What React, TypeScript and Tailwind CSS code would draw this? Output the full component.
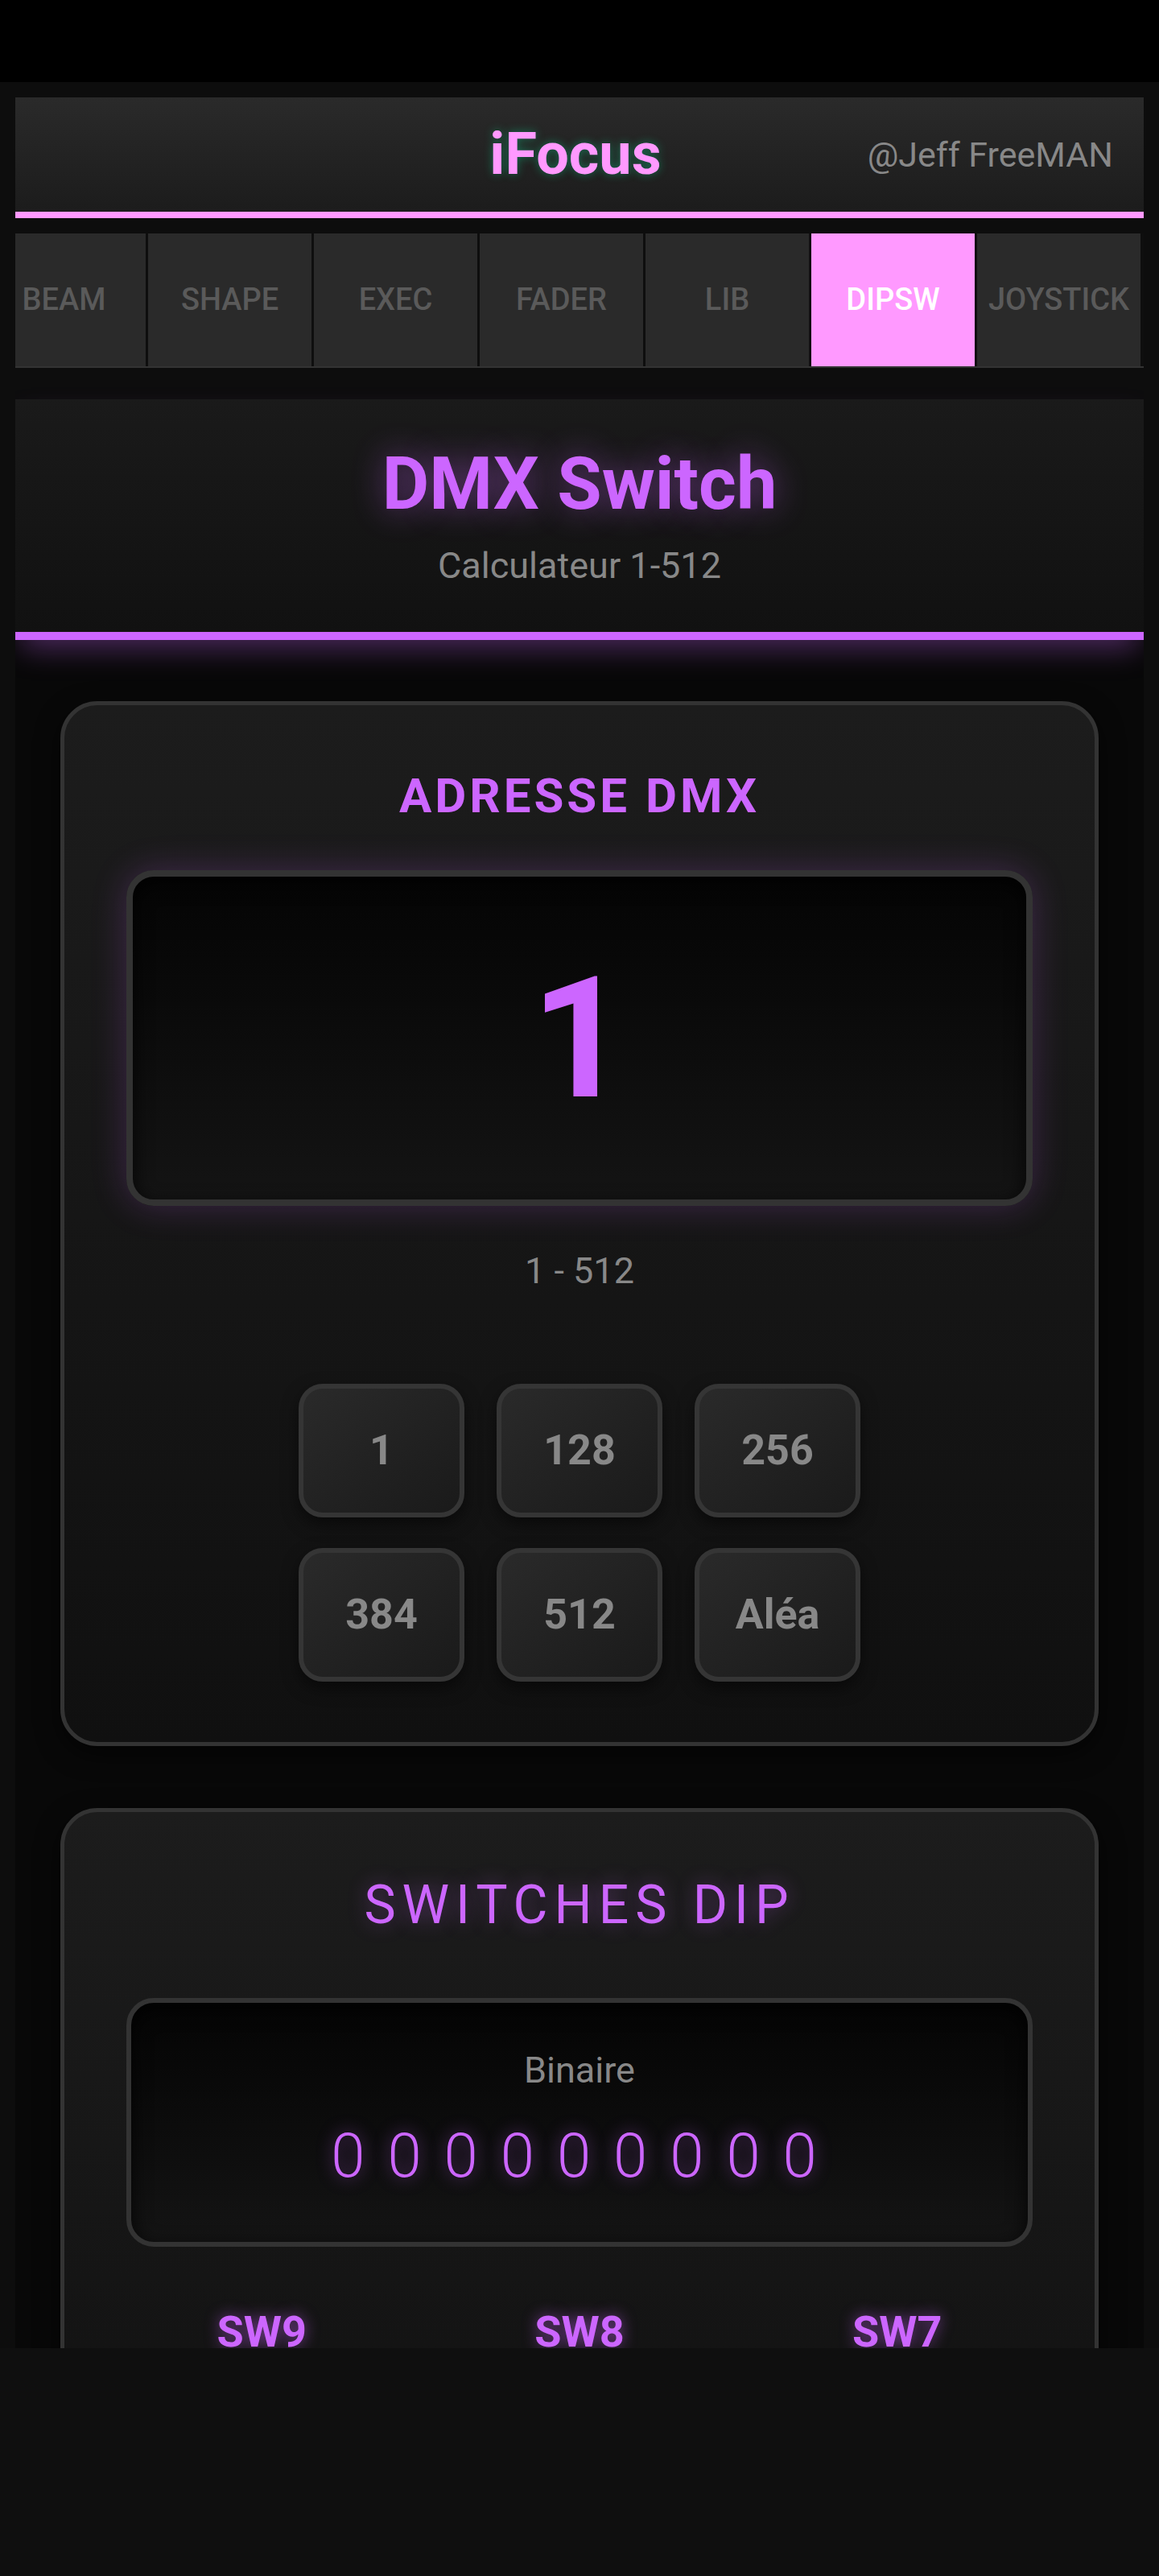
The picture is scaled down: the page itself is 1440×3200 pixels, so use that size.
import React from "react"

const tabs = ["BEAM", "SHAPE", "EXEC", "FADER", "LIB", "DIPSW", "JOYSTICK"]
const presets = ["1", "128", "256", "384", "512", "Aléa"]
const bits = [0, 0, 0, 0, 0, 0, 0, 0, 0]
const switches = ["SW9", "SW8", "SW7"]

function Header() {
  return (
    <header className="grid h-[150px] shrink-0 grid-cols-[1fr_auto_1fr] items-center border-b-[8px] border-[#ff99ff] bg-gradient-to-b from-[#2a2a2a] to-[#1c1c1c] px-[38px]">
      <div />
      <h1 className="pr-[10px] text-[72px] leading-none font-bold text-[#ff99ff] [text-shadow:0_0_12px_rgba(0,255,170,0.35)]">
        iFocus
      </h1>
      <span className="justify-self-end text-[43px] leading-none text-[#888]">@Jeff FreeMAN</span>
    </header>
  )
}

function Tabs() {
  return (
    <nav className="mt-[19px] shrink-0 overflow-hidden border-b-2 border-[#333]">
      <div className="-ml-[41px] flex gap-[3px] bg-[#0e0e0e]">
        {tabs.map((tab) => (
          <div
            key={tab}
            className={
              tab === "DIPSW"
                ? "flex h-[165px] w-[203px] shrink-0 items-center justify-center bg-[#ff99ff] text-[38px] font-medium text-white"
                : "flex h-[165px] w-[203px] shrink-0 items-center justify-center bg-[#2a2a2a] text-[38px] font-medium text-[#5a5a5a]"
            }
          >
            {tab}
          </div>
        ))}
      </div>
    </nav>
  )
}

function Card({ children }: { children: React.ReactNode }) {
  return (
    <section className="rounded-[46px] border-[5px] border-[#333] bg-gradient-to-b from-[#1c1c1c] to-[#101010] px-[77px] shadow-[0_10px_30px_rgba(0,0,0,0.6)]">
      {children}
    </section>
  )
}

export default function App() {
  return (
    <div className="min-h-[3200px] bg-[#0f0f0f] font-['Roboto',sans-serif]">
      <div className="h-[102px] bg-black" />
      <div className="h-[2815px] bg-[#0d0d0d] px-[19px] pt-[19px]">
        <div className="flex h-full flex-col overflow-hidden">
          <Header />
          <Tabs />

          <main className="mt-[39px] flex-1 bg-[#080808]">
            {/* Title block */}
            <div className="relative border-b-[10px] border-[#cc66ff] bg-gradient-to-b from-[#1a1a1a] to-[#111] pt-[61px] pb-[60px] text-center shadow-[0_18px_34px_-8px_rgba(204,102,255,0.35)]">
              <h2 className="text-[90px] leading-none font-bold text-[#cc66ff] [text-shadow:0_0_40px_rgba(204,102,255,0.45)]">
                DMX Switch
              </h2>
              <p className="mt-[33px] text-[45px] leading-none text-[#888]">Calculateur 1-512</p>
            </div>

            <div className="flex flex-col gap-[77px] px-[56px] pt-[76px]">
              {/* Address card */}
              <Card>
                <h3 className="pt-[83px] text-center text-[60px] leading-none font-bold tracking-[4px] text-[#cc66ff]">
                  ADRESSE DMX
                </h3>
                <div className="mt-[62px] flex h-[417px] items-center justify-center rounded-[34px] border-[8px] border-[#333] bg-gradient-to-b from-[#050505] to-[#141414] shadow-[0_0_44px_rgba(204,102,255,0.22),inset_0_8px_24px_rgba(0,0,0,0.8)]">
                  <span className="text-[210px] leading-none font-bold text-[#cc66ff]">1</span>
                </div>
                <p className="mt-[58px] text-center text-[45px] leading-none text-[#888]">1 - 512</p>
                <div className="mx-auto mt-[118px] grid w-fit grid-cols-[repeat(3,206px)] gap-x-[40px] gap-y-[38px] pb-[75px]">
                  {presets.map((p) => (
                    <button
                      key={p}
                      className="flex h-[166px] items-center justify-center rounded-[30px] border-[6px] border-[#353535] bg-gradient-to-br from-[#2a2a2a] to-[#1a1a1a] text-[52px] font-bold text-[#888] shadow-[0_8px_20px_rgba(0,0,0,0.5)]"
                    >
                      {p}
                    </button>
                  ))}
                </div>
              </Card>

              {/* DIP switches card */}
              <Card>
                <h3 className="pt-[83px] text-center text-[66px] leading-none tracking-[8px] text-[#cc66ff] [text-shadow:0_0_24px_rgba(204,102,255,0.35)]">
                  SWITCHES DIP
                </h3>
                <div className="mt-[82px] rounded-[34px] border-[6px] border-[#333] bg-gradient-to-b from-[#050505] to-[#141414] pt-[61px] pb-[69px] text-center shadow-[inset_0_8px_24px_rgba(0,0,0,0.8)]">
                  <p className="text-[45px] leading-none text-[#888]">Binaire</p>
                  <div className="mt-[46px] flex justify-center gap-[28px] pr-[14px] text-[76px] leading-none font-light text-[#cc66ff] [text-shadow:0_0_20px_rgba(204,102,255,0.5)]">
                    {bits.map((b, i) => (
                      <span key={i}>{b}</span>
                    ))}
                  </div>
                </div>
                <div className="mt-[79px] grid grid-cols-3 gap-x-[58px] pb-[80px]">
                  {switches.map((sw) => (
                    <div key={sw} className="flex flex-col items-center gap-[30px]">
                      <span className="text-[54px] leading-none font-bold text-[#cc66ff] [text-shadow:0_0_18px_rgba(204,102,255,0.55)]">
                        {sw}
                      </span>
                      <div className="flex h-[220px] w-[110px] items-end rounded-[30px] border-[6px] border-[#333] bg-[#0c0c0c] p-[10px]">
                        <div className="h-[90px] w-full rounded-[20px] bg-gradient-to-b from-[#444] to-[#2a2a2a]" />
                      </div>
                    </div>
                  ))}
                </div>
              </Card>
            </div>
          </main>
        </div>
      </div>
    </div>
  )
}
